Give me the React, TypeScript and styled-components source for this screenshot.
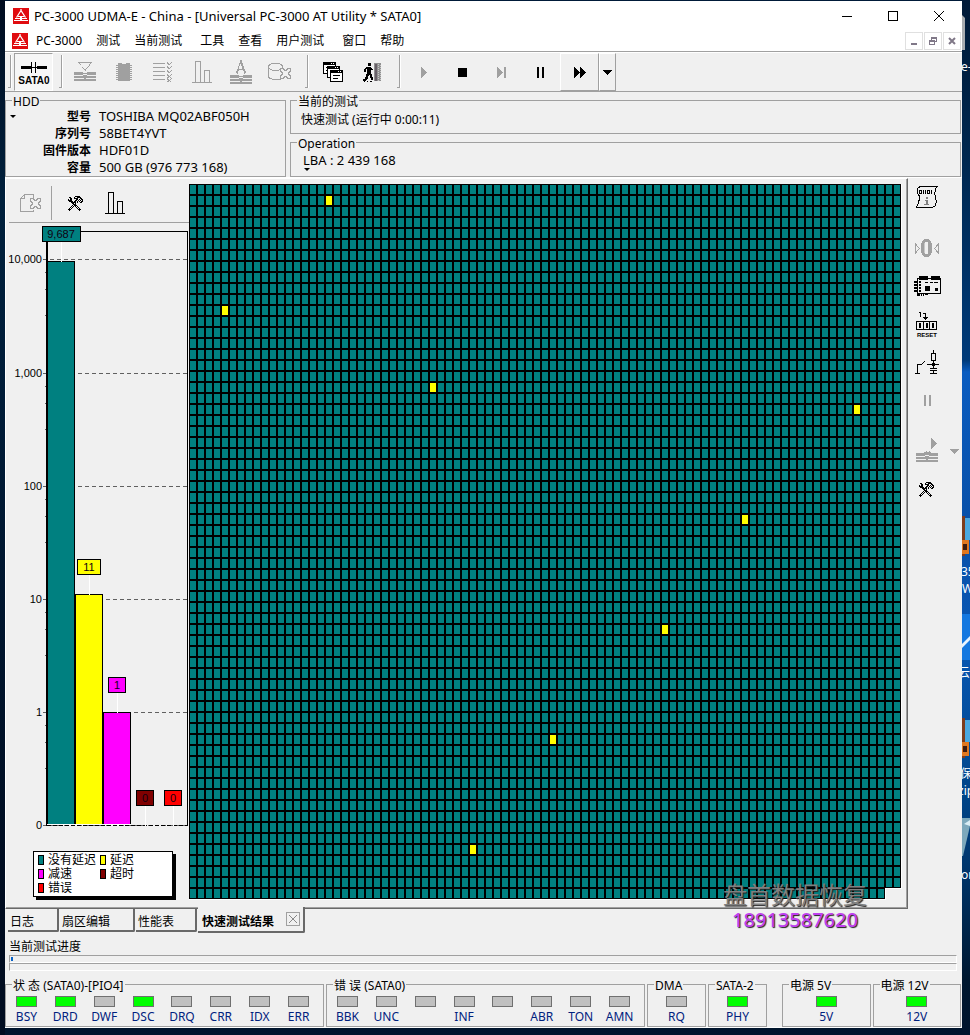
import React from 'react';
import styled, { createGlobalStyle, css } from 'styled-components';

const FACE = '#f0f0f0';
const SHADOW = '#a0a0a0';
const DARK = '#696969';
const TEAL = '#008080';
const YELLOW = '#ffff00';
const MAGENTA = '#ff00ff';
const MAROON = '#800000';
const RED = '#ff0000';

const GlobalStyle = createGlobalStyle`
  * { box-sizing: border-box; }
  body {
    margin: 0;
    background: #00142c;
    color: #000;
    font: 12px/16px "Noto Sans", "Noto Sans CJK SC", sans-serif;
  }
  button {
    margin: 0;
    padding: 0;
    border: 0;
    background: none;
    color: inherit;
    font: inherit;
  }
  svg { display: block; }
`;

/* ---------- desktop and window frame ---------- */

const Desktop = styled.div`
  position: relative;
  min-height: 100vh;
  padding: 1px 8px 8px 5px;
  overflow: hidden;
  background: linear-gradient(#001a38 0, #002850 160px, #003a78 360px, #0a5cc0 372px, #0850a8 520px, #0a58b4 640px, #004a94 760px, #003870 860px, #001830 980px, #00142c);
`;

const LeftEdge = styled.div`
  position: absolute;
  left: 0;
  top: 0;
  bottom: 0;
  width: 5px;
  background: linear-gradient(#000c20, #00203c 200px, #001c38 400px, #000c20 900px);
`;

const RightEdge = styled.svg`
  position: absolute;
  right: 0;
  top: 0;
`;

const Window = styled.main`
  position: relative;
  display: flex;
  flex-direction: column;
  background: ${FACE};
  border-bottom: 1px solid #fff;
`;

const TitleBar = styled.header`
  display: flex;
  align-items: center;
  height: 29px;
  padding-left: 8px;
  background: #fff;
`;

const Title = styled.h1`
  flex: 1;
  margin: 0 0 0 5px;
  font-size: 13px;
  font-weight: 400;
  white-space: nowrap;
`;

const CaptionButton = styled.button`
  display: grid;
  place-items: center;
  width: 46px;
  height: 29px;
`;

const MenuBar = styled.nav`
  display: flex;
  align-items: center;
  height: 22px;
  padding: 0 1px 0 7px;
  background: #fff;
  border-bottom: 1px solid ${SHADOW};
`;

const MenuGroups = styled.div`
  display: flex;
  flex: 1;
  gap: 18px;
  margin-left: 8px;
`;

const MenuGroup = styled.div`
  display: flex;
  gap: 14px;
`;

const MdiButtons = styled.div`
  display: flex;
  gap: 1px;
`;

const MdiButton = styled.button`
  display: grid;
  place-items: center;
  width: 18px;
  height: 18px;
  border: 1px solid #e0e0e0;
`;

/* ---------- main tool bar ---------- */

const ToolBar = styled.div`
  display: flex;
  align-items: stretch;
  height: 40px;
  padding-left: 3px;
  border-top: 1px solid #fff;
  border-bottom: 1px solid ${SHADOW};
`;

const Grip = styled.span<{ $before?: number; $after?: number }>`
  width: 3px;
  margin: 2px ${(p) => p.$after ?? 0}px 3px ${(p) => p.$before ?? 0}px;
  border-right: 1px solid ${SHADOW};
  border-bottom: 1px solid ${SHADOW};
  box-shadow: 1px 0 0 #fff;
`;

const ToolButton = styled.button<{ $pressed?: boolean; $raised?: boolean; $narrow?: boolean }>`
  display: grid;
  place-items: center;
  width: ${(p) => (p.$narrow ? 17 : 39)}px;
  ${(p) =>
    p.$pressed &&
    css`
      background: #f6f6f6;
      border: 1px solid;
      border-color: ${SHADOW} #fff #fff ${SHADOW};
    `}
  ${(p) =>
    p.$raised &&
    css`
      border: 1px solid;
      border-color: #fff ${SHADOW} ${SHADOW} #fff;
    `}
`;

/* ---------- information groups ---------- */

const InfoArea = styled.section`
  display: grid;
  grid-template-columns: 281px 1fr;
  column-gap: 4px;
  padding-right: 1px;
`;

const InfoColumn = styled.div`
  display: flex;
  flex-direction: column;
`;

const Group = styled.fieldset<{ $grow?: number }>`
  position: relative;
  flex: ${(p) => (p.$grow ? `${p.$grow} 1 0` : 'none')};
  min-width: 0;
  margin: 0;
  padding: 0 0 0 6px;
  border: 1px solid ${SHADOW};
`;

const Legend = styled.legend`
  padding: 3px 1px 0;
  background: ${FACE};
  line-height: 14px;
  white-space: nowrap;
`;

const HddList = styled.dl`
  display: grid;
  grid-template-columns: 79px 1fr;
  column-gap: 8px;
  margin: -1px 0 0;
  line-height: 17px;

  dt { font-weight: 700; text-align: right; }
  dd { margin: 0; font-size: 13px; }
`;

const DropMark = styled.span<{ $low?: boolean }>`
  position: absolute;
  left: ${(p) => (p.$low ? 13 : 4)}px;
  top: ${(p) => (p.$low ? 17 : 6)}px;
  border: 3px solid transparent;
  border-top-color: #000;
  border-bottom: 0;
`;

const CurrentTest = styled.p`
  margin: 0;
  padding: 0 0 2px 4px;
  line-height: 22px;
`;

const OperationText = styled.p`
  margin: 0;
  padding: 0 0 7px 6px;
  font-size: 13px;
  line-height: 18px;
`;

/* ---------- result page ---------- */

const Workspace = styled.section`
  display: flex;
  border-top: 1px solid #fff;
`;

const ResultPage = styled.div`
  display: flex;
  flex: 1;
  min-width: 0;
  padding-bottom: 8px;
  border: 1px solid;
  border-color: #fff ${DARK} ${DARK} #fff;
  box-shadow: inset -1px -1px 0 ${SHADOW};
`;

const StatsColumn = styled.div`
  flex: none;
  width: 183px;
`;

const PageTools = styled.div`
  display: flex;
  align-items: center;
  height: 44px;
  margin: 0 0 1px 3px;
  padding: 5px 0 0 2px;
  border-bottom: 1px solid ${SHADOW};
`;

const PageTool = styled.button`
  display: grid;
  place-items: center;
  width: 39px;
  height: 36px;
`;

const Divider = styled.span`
  width: 1px;
  height: 34px;
  margin: 0 4px 0 1px;
  background: ${SHADOW};
`;

const ChartLegend = styled.ul`
  display: grid;
  grid-template-columns: 62px 1fr;
  width: 140px;
  margin: 9px 0 0 27px;
  padding: 1px 4px;
  border: 1px solid #000;
  background: #fff;
  box-shadow: 4px 4px 0 -1px #000, 3px 3px 0 #000;
  list-style: none;
  line-height: 14px;
`;

const LegendItem = styled.li`
  display: flex;
  align-items: center;
  gap: 4px;
  white-space: nowrap;
`;

const Swatch = styled.i<{ $color: string }>`
  width: 6px;
  height: 10px;
  border: 1px solid #000;
  background: ${(p) => p.$color};
`;

const MapArea = styled.div`
  flex: 1;
  min-width: 0;
  padding-top: 5px;
`;

const SideBar = styled.aside`
  flex: none;
  width: 54px;
`;

const SideGroup = styled.div`
  display: flex;
  flex-direction: column;
  margin-bottom: 13px;
`;

const SideRow = styled.div`
  display: flex;
`;

const SideButton = styled.button<{ $narrow?: boolean }>`
  display: grid;
  place-items: center;
  width: ${(p) => (p.$narrow ? 16 : 38)}px;
  height: 38px;
`;

/* ---------- tabs, progress, status ---------- */

const Tabs = styled.div`
  display: flex;
  align-items: flex-start;
  height: 26px;
  padding-left: 3px;
`;

const Tab = styled.button<{ $width: number }>`
  width: ${(p) => p.$width}px;
  height: 23px;
  margin-right: 1px;
  padding: 4px 0 0 2px;
  border-right: 2px solid ${DARK};
  border-bottom: 2px solid ${DARK};
  border-radius: 0 0 2px 0;
  text-align: left;
  white-space: nowrap;
`;

const ActiveTab = styled.div`
  display: flex;
  align-items: center;
  justify-content: space-between;
  width: 107px;
  height: 26px;
  margin-top: -2px;
  padding: 0 3px 1px 4px;
  border-right: 2px solid ${DARK};
  border-bottom: 2px solid ${DARK};
  border-radius: 0 0 2px 0;
  background: ${FACE};
`;

const ActiveTabLabel = styled.button`
  padding-top: 6px;
  font-weight: 700;
  white-space: nowrap;
`;

const CloseTab = styled.button`
  display: grid;
  place-items: center;
  width: 14px;
  height: 14px;
  border: 1px solid ${SHADOW};
`;

const ProgressLabel = styled.label`
  display: block;
  margin: 3px 4px 0;
  line-height: 17px;
`;

const Bar = styled.progress`
  display: block;
  appearance: none;
  width: calc(100% - 9px);
  height: 8px;
  margin-left: 4px;
  padding: 1px;
  border: 1px solid;
  border-color: ${SHADOW} #fff #fff ${SHADOW};
  background: ${FACE};

  &::-webkit-progress-bar { background: ${FACE}; }
  &::-webkit-progress-value { background: #0a64c8; }
`;

const StatusBar = styled.footer`
  display: flex;
  gap: 15px;
  margin-top: 5px;
  padding-right: 1px;
`;

const StatusSet = styled.div<{ $grow: number }>`
  display: flex;
  flex: ${(p) => p.$grow} 1 0;
  gap: 2px;
`;

const LampGroup = styled(Group)`
  padding: 0 1px;
`;

const LampLegend = styled(Legend)`
  margin-left: 5px;
`;

const Lamps = styled.div<{ $row: boolean }>`
  display: flex;
  height: 33px;
  padding: 3px ${(p) => (p.$row ? 4 : 0)}px 0 0;
`;

const Lamp = styled.div`
  flex: 1;
  color: #00217e;
  text-align: center;
  line-height: 18px;
`;

const Led = styled.i<{ $on?: boolean }>`
  display: block;
  width: 21px;
  height: 11px;
  margin: 0 auto 1px;
  border: 1px solid #707070;
  background: ${(p) => (p.$on ? '#00ff00' : '#c0c0c0')};
`;

const Watermark = styled.div`
  position: absolute;
  right: 93px;
  bottom: 95px;
  width: 148px;
  text-align: center;
  text-shadow: 1px 1px 1px #202020;
`;

const WatermarkName = styled.div`
  color: #808080;
  font-size: 24px;
  line-height: 26px;
  white-space: nowrap;
`;

const WatermarkPhone = styled.div`
  color: #c040f0;
  font-size: 20px;
  font-weight: 500;
  line-height: 24px;
`;

/* ---------- icons ---------- */

type IconProps = { w: number; h: number; color?: string; children: React.ReactNode };

const Icon = ({ w, h, color = '#000', children }: IconProps) => (
  <svg width={w} height={h} viewBox={`0 0 ${w} ${h}`} shapeRendering="crispEdges" fill={color} aria-hidden="true">
    {children}
  </svg>
);

/* One-bit picture: every # of a row is a filled pixel. */
const Bitmap = ({ rows, color }: { rows: string[]; color?: string }) => {
  const d = rows
    .flatMap((row, y) => [...row].map((c, x) => (c === '#' ? `M${x} ${y}h1v1h-1z` : '')))
    .join('');
  return (
    <Icon w={Math.max(...rows.map((r) => r.length))} h={rows.length} color={color}>
      <path d={d} />
    </Icon>
  );
};

const AppIcon = () => (
  <svg width="16" height="16" viewBox="0 0 16 16" aria-hidden="true">
    <rect width="16" height="16" fill="#e00c10" />
    <path d="M8 1v2M8 2.500L3.500 9.500M8 2.500L12.500 9.500" stroke="#fff" strokeWidth="1.300" fill="none" />
    <path d="M5 8h6v1H5zM2 10h12v1H2zM1 12h14v1H1z" fill="#fff" />
    <path d="M7 9h2v4H7z" fill="#fff" />
  </svg>
);

const SataIcon = () => (
  <Icon w={32} h={26}>
    <path d="M3 7h10v1h6v-1h10v3H19v-1h-6v1H3zM13 3h1v11h-1zM17 3h1v11h-1z" />
    <text x="16" y="25" fontFamily="Liberation Sans, sans-serif" fontWeight="700" fontSize="10" textAnchor="middle">
      SATA0
    </text>
  </Icon>
);

const PLATES = 'M0 0h9v1h4v-1h9v3h-9v-1h-4v1H0zM0 4h22v2H0zM0 7h22v2H0zM9 3h4v1H9zM10 6h2v1h-2z';

const ClearIcon = () => (
  <Icon w={22} h={20} color={SHADOW}>
    <path d="M4 0h14v1H4zM5 1h1v1h1v2h1v1h1v1h1v1h1v1h1v1h-1v-1h-1v-1h-1v-1h-1v-2h-1v-1h-1zM16 1h1v1h-1v2h-1v1h-1v1h-1v1h-1v1h-1v-1h1v-1h1v-1h1v-1h1v-2h1z" />
    <path transform="translate(0 10)" d={PLATES} />
  </Icon>
);

const ChipIcon = () => (
  <Icon w={16} h={20} color={SHADOW}>
    <path d="M2 1h4v1h4v-1h4v18H2z" />
    <path d="M0 3h16v1H0zM0 5h16v1H0zM0 7h16v1H0zM0 9h16v1H0zM0 11h16v1H0zM0 13h16v1H0zM0 15h16v1H0zM0 17h16v1H0z" />
  </Icon>
);

const ListIcon = () => (
  <Icon w={20} h={20} color={SHADOW}>
    <path d="M0 1h12v1H0zM0 5h12v1H0zM0 9h12v1H0zM0 13h12v1H0zM0 17h12v1H0z" />
    {[0, 4, 8].map((y) => (
      <path key={y} transform={`translate(14 ${y})`} d="M0 0h1v1h1v1h1v-1h1v-1h1v1h-1v1h-1v1h-2v-1h-1z" />
    ))}
    {[12, 16].map((y) => (
      <path key={y} transform={`translate(14 ${y})`} d="M0 0h1v1h1v1h1v-1h1v-1h1v1h-1v1h-1v1h1v1h-1v-1h-1v1H0v-1h1v-1h-1z" />
    ))}
  </Icon>
);

const BarsIcon = ({ color }: { color?: string }) => (
  <Icon w={20} h={22} color={color}>
    <path d="M0 21h20v1H0zM3 0h6v21H8V1H4v20H3zM12 9h6v12h-1V10h-4v11h-1z" />
  </Icon>
);

const CompassIcon = () => (
  <Icon w={22} h={24} color={SHADOW}>
    <path d="M10 0h2v3h1v3h1v3h1v2h1v2h-1v1h-1v-3h-1v-2h-1V6h-1V4h-1v2h-1v3H9v2H8v3H7v-1H6v-2h1V9h1V6h1V3h1zM9 9h4v1H9z" />
    <path transform="translate(0 15)" d={PLATES} />
  </Icon>
);

const CROSS = 'M1 0h3v1h1v1h2v-1h1v-1h3v3h-1v1h-1v2h1v1h1v3h-3v-1h-1v-1H5v1H4v1H1v-3h1v-1h1V4H2V3H1z';

const DiskCrossIcon = () => (
  <Icon w={23} h={18} color={SHADOW}>
    <g fill="none" stroke={SHADOW}>
      <path d="M.5 4v9M14.500 3v3M.5 4c0-5 14-5 14 0M.5 4c0 5 14 4 14 0M.5 13c0 4 10 4 12 3" />
      <path d={CROSS} transform="translate(11.500 5.500)" fill={FACE} />
    </g>
  </Icon>
);

const WindowsIcon = () => (
  <Icon w={20} h={21}>
    {[0, 4, 8].map((n) => (
      <g key={n} transform={`translate(${n === 8 ? 7 : n} ${n})`}>
        <path d="M0 0h13v12H0z" />
        <path d="M1 3h11v8H1zM8 1h1v1H8zM10 1h1v1h-1z" fill="#fff" />
        <path d="M3 5h7v1H3zM3 8h5v1H3z" />
      </g>
    ))}
  </Icon>
);

const ExitIcon = () => (
  <Icon w={18} h={19}>
    <path d="M5 0h3v3H5zM3 4h5v1h1v1h1v1H8v4h1v3h1v3H8v-2H7v-3H6v1H5v3H4v1H3v1H0v-2h2v-2h1v-3h1V6H3v3H1V6h1V5h1zM1 18h1v1H1zM4 18h1v1H4zM7 18h2v1H7z" />
    <path d="M11 0h7v18h-7z" fill="#909090" />
    <path d="M12 1h2v17h-2z" fill="#686068" />
    <path d="M15.500 1v17M17.500 2v16" stroke="#c8c8c8" strokeDasharray="1 1" />
  </Icon>
);

const PlayIcon = () => (
  <Icon w={6} h={11} color={SHADOW}><path d="M0 0h1v1h1v1h1v1h1v1h1v1h1v1h-1v1h-1v1h-1v1h-1v1h-1v1H0z" /></Icon>
);
const StopIcon = () => <Icon w={9} h={9}><path d="M0 0h9v9H0z" /></Icon>;
const StepIcon = () => (
  <Icon w={9} h={11} color={SHADOW}><path d="M0 0h1v1h1v1h1v1h1v1h1v1h1v1h-1v1h-1v1h-1v1h-1v1h-1v1H0zM7 0h2v11H7z" /></Icon>
);
const PauseIcon = ({ color }: { color?: string }) => (
  <Icon w={7} h={11} color={color}><path d="M0 0h2v11H0zM5 0h2v11H5z" /></Icon>
);
const FastIcon = () => (
  <Icon w={12} h={11}>
    {[0, 6].map((x) => (
      <path key={x} transform={`translate(${x} 0)`} d="M0 0h1v1h1v1h1v1h1v1h1v1h1v1h-1v1h-1v1h-1v1h-1v1h-1v1H0z" />
    ))}
  </Icon>
);
const DownIcon = ({ color }: { color?: string }) => (
  <Icon w={9} h={5} color={color}><path d="M0 0h9v1H8v1H7v1H6v1H5v1H4V4H3V3H2V2H1V1H0z" /></Icon>
);

const PageCrossIcon = () => (
  <Icon w={21} h={19}>
    <g fill="none" stroke={SHADOW}>
      <path d="M.5 4.500v13h13v-2M4.500 .5h9v6M4.500 .5v4h-4zM4.500 .5l-4 4" />
      <path d={CROSS} transform="translate(9.500 4.500)" fill={FACE} />
    </g>
  </Icon>
);

const HammerIcon = () => (
  <Bitmap
    rows={[
      '.......#####....',
      '.##...#..####...',
      '..##..####..##..',
      '#.##....##.#.##.',
      '####...##.#.#.#.',
      '.####.##.#.#.##.',
      '...#####.#..##..',
      '....##.#........',
      '.....###........',
      '....#.###.......',
      '...#.#.#.#......',
      '..#.#...#.#.....',
      '.#.#.....#.#....',
      '###.......###...',
      '.#.........#....',
    ]}
  />
);

const ScrollIcon = () => (
  <Icon w={22} h={22}>
    <path d="M3 0h19v1H3zM2 1h2v1H2zM1 2h1v6H1zM2 8h1v2H2zM3 9h1v6H3zM2 14h1v4H2zM1 18h1v2H1zM0 20h1v1H0zM0 21h17v1H0zM17 20h2v1h-2zM19 17h1v3h-1zM20 14h1v3h-1zM19 9h1v5h-1zM18 6h1v3h-1zM19 2h1v4h-1zM20 1h1v1h-1z" />
    <g fill="none" stroke="#000">
      <path d="M3.500 4.500h2v3h-2zM7.500 4v4M9.500 4v4M11.500 4.500h2v3h-2zM15.500 4v4" />
    </g>
    <path d="M10 11h2v2h-2zM9 14h3v4h1v1H8v-1h2v-3H9z" fill="#808080" />
  </Icon>
);

const ZeroIcon = () => (
  <Icon w={24} h={18} color={SHADOW}>
    <path d="M9 0h5v1h1v1h1v2h1v10h-1v2h-1v1h-1v1H9v-1H8v-1H7v-2H6V4h1V2h1V1h1zM10 3v12h3V3z" fillRule="evenodd" />
    <path d="M9 4h1v10H9z" fill="#c8c8c8" />
    <path d="M.5 5v9l4-4.500zM23.500 5v9l-4-4.500z" fill="none" stroke={SHADOW} />
  </Icon>
);

const BoardIcon = () => (
  <Icon w={27} h={20}>
    <path d="M3 2h24v16H3zM4 3v14h22V3z" fillRule="evenodd" />
    <path d="M5 0h9v4H5zM17 0h9v4h-9zM3 18h3v2H3zM7 18h1v2H7zM9 18h1v2H9zM11 18h3v1h-3z" />
    <path d="M0 5h3v2H0zM0 8h3v2H0zM0 11h3v2H0zM0 14h3v2H0zM5 5h2v2H5zM5 8h2v2H5zM5 11h2v2H5zM5 14h2v2H5zM11 10h5v5h-5zM21 12h3v3h-3zM11 6h3v1h-3zM16 6h3v1h-3zM20 6h4v1h-4z" />
  </Icon>
);

const ResetIcon = () => (
  <Icon w={22} h={26}>
    <path d="M3 1h2v5H4V2H3zM7 2h3v4h2v1h-1v1h-1v1H9V8H8V7H7V6h2V3H7z" />
    <path d="M0 10h21v1H0zM0 18h21v1H0zM0 10h1v9H0zM7 10h1v9H7zM13 10h1v9h-1zM20 10h1v9h-1z" />
    <path d="M3.500 12.500h1v4h-1zM10.500 12.500h1v4h-1zM16.500 12.500h1v4h-1z" fill="none" stroke="#000" />
    <text x="11" y="26" fontFamily="Liberation Sans, sans-serif" fontWeight="700" fontSize="6" textAnchor="middle">
      RESET
    </text>
  </Icon>
);

const PowerIcon = () => (
  <Icon w={24} h={24}>
    <path d="M18 0h1v3h-1zM16 3h5v1h-5zM16 3h1v8h-1zM20 3h1v8h-1zM16 10h5v1h-5zM18 11h1v7h-1zM17 13h3v3h-3zM12 14h12v1H12zM15 18h7v1h-7zM15 20h7v1h-7zM18 21h1v2h-1zM15 23h7v1h-7z" />
    <path d="M0 23h5v1H0zM2 14h1v9H2zM2 14h5v1H2zM7 13h1v1H7zM8 12h1v1H8zM9 11h1v1H9z" />
  </Icon>
);

const SpinIcon = () => (
  <Icon w={22} h={26} color={SHADOW}>
    <path d="M15 0h1v1h1v1h1v1h1v1h1v1h1v1h-1v1h-1v1h-1v1h-1v1h-1v1h-1zM8 14h2v-1h1v1h2v-1h1v1h1v2H7v-1h1z" />
    <path transform="translate(0 15)" d={PLATES} />
  </Icon>
);

/* ---------- chart ---------- */

const bars = [
  { x: 42, top: 37, color: TEAL, label: '9,687', w: 39, boxY: 2 },
  { x: 70, top: 370, color: YELLOW, label: '11', w: 24, boxY: 335 },
  { x: 98, top: 488, color: MAGENTA, label: '1', w: 18, boxY: 453 },
  { x: 126, top: 601, color: MAROON, label: '0', w: 18, boxY: 566 },
  { x: 154, top: 601, color: RED, label: '0', w: 18, boxY: 566 },
];

const axis = [
  { y: 35, label: '10,000' },
  { y: 149, label: '1,000' },
  { y: 262, label: '100' },
  { y: 375, label: '10' },
  { y: 488, label: '1' },
  { y: 601, label: '0' },
];

const SpeedChart = () => (
  <svg width="183" height="618" viewBox="1 0 183 618" shapeRendering="crispEdges" fontFamily="Liberation Sans, sans-serif" fontSize="11">
    <path d="M41 7h142v594" fill="none" stroke="#000" transform="translate(-.5 .5)" />
    {axis.map((a) => (
      <g key={a.label}>
        <path d={`M38 ${a.y}.5H182`} stroke="#606060" strokeDasharray="4 3" />
        <path d={`M38 ${a.y}.5h4`} stroke="#606060" />
        <text x="37" y={a.y + 4} textAnchor="end">{a.label}</text>
        {a.label !== '0' &&
          [13, 30, 56].map((n) => <path key={n} d={`M40 ${a.y + n}.5h2`} stroke="#606060" />)}
      </g>
    ))}
    <rect x="41" y="7" width="2" height="595" />
    <path d="M42 601.500h140" stroke="#000" strokeDasharray="4 2" />
    {bars.map((b) => (
      <g key={b.x}>
        {b.top < 601 && (
          <>
            <rect x={b.x} y={b.top} width="28" height={600 - b.top} />
            <rect x={b.x + 1} y={b.top + 1} width="26" height={599 - b.top} fill={b.color} />
            <rect x={b.x} y="600" width="28" height="1" fill="#fff" />
          </>
        )}
        <rect x={b.x + 14} y={b.boxY + 16} width="1" height={b.top - b.boxY - 15} fill="#fff" />
        <rect x={b.x + 14 - Math.floor(b.w / 2)} y={b.boxY} width={b.w} height="16" />
        <rect x={b.x + 15 - Math.floor(b.w / 2)} y={b.boxY + 1} width={b.w - 2} height="14" fill={b.color} />
        <text x={b.x + 14} y={b.boxY + 12} textAnchor="middle" fill="#100010">{b.label}</text>
      </g>
    ))}
  </svg>
);

/* ---------- sector map ---------- */

const COLS = 89;
const ROWS = 65;
const CELL_W = 8;
const CELL_H = 11;
const slowCells = [[17, 1], [4, 11], [30, 18], [83, 20], [69, 30], [59, 40], [45, 50], [35, 60]];

const SectorMap = () => (
  <svg width={COLS * CELL_W + 1} height={ROWS * CELL_H + 1} shapeRendering="crispEdges" role="img" aria-label="LBA map">
    <defs>
      <pattern id="cell" width={CELL_W} height={CELL_H} patternUnits="userSpaceOnUse">
        <rect width={CELL_W} height={CELL_H} />
        <rect x="1" y="1" width="6" height="9" fill={TEAL} />
      </pattern>
    </defs>
    <rect width="100%" height="100%" fill="#fff" />
    <rect x={(COLS - 2) * CELL_W + 1} y={(ROWS - 1) * CELL_H + 1} width="16" height="11" fill={FACE} />
    <rect width={COLS * CELL_W} height={(ROWS - 1) * CELL_H} fill="url(#cell)" />
    <rect y={(ROWS - 1) * CELL_H} width={(COLS - 2) * CELL_W} height={CELL_H} fill="url(#cell)" />
    {slowCells.map(([c, r]) => (
      <rect key={`${c}-${r}`} x={c * CELL_W + 1} y={r * CELL_H + 1} width="6" height="9" fill={YELLOW} />
    ))}
  </svg>
);

/* ---------- data ---------- */

const menus = [['PC-3000', '测试', '当前测试'], ['工具', '查看', '用户测试'], ['窗口', '帮助']];

const hdd = [
  ['型号', 'TOSHIBA MQ02ABF050H'],
  ['序列号', '58BET4YVT'],
  ['固件版本', 'HDF01D'],
  ['容量', '500 GB (976 773 168)'],
];

const legend = [
  { name: '没有延迟', color: TEAL },
  { name: '延迟', color: YELLOW },
  { name: '减速', color: MAGENTA },
  { name: '超时', color: MAROON },
  { name: '错误', color: RED },
];

type LampSet = { title: string; grow: number; lamps: string[]; on: string[] };

const signalSets: LampSet[] = [
  { title: '状 态 (SATA0)-[PIO4]', grow: 315, lamps: ['BSY', 'DRD', 'DWF', 'DSC', 'DRQ', 'CRR', 'IDX', 'ERR'], on: ['BSY', 'DRD', 'DSC'] },
  { title: '错 误 (SATA0)', grow: 315, lamps: ['BBK', 'UNC', '', 'INF', '', 'ABR', 'TON', 'AMN'], on: [] },
  { title: 'DMA', grow: 55, lamps: ['RQ'], on: [] },
  { title: 'SATA-2', grow: 55, lamps: ['PHY'], on: ['PHY'] },
];

const powerSets: LampSet[] = [
  { title: '电源 5V', grow: 85, lamps: ['5V'], on: ['5V'] },
  { title: '电源 12V', grow: 85, lamps: ['12V'], on: ['12V'] },
];

const LampBox = ({ set }: { set: LampSet }) => (
  <LampGroup $grow={set.grow}>
    <LampLegend>{set.title}</LampLegend>
    <Lamps $row={set.lamps.length > 1}>
      {set.lamps.map((name, i) => (
        <Lamp key={i}>
          <Led $on={set.on.includes(name)} />
          {name}
        </Lamp>
      ))}
    </Lamps>
  </LampGroup>
);

const DesktopIcons = () => (
  <RightEdge width="8" height="1035" viewBox="0 0 8 1035" aria-hidden="true">
    <path d="M0 15l3 3v32H0z" fill="#a8acb0" />
    <g fill="#fff" fontFamily="Noto Sans, Noto Sans CJK SC, sans-serif" fontSize="12">
      <text x="-1" y="71">e-</text>
      <text x="-1" y="576">35</text>
      <text x="0" y="593">W</text>
      <text x="-4" y="677">云</text>
      <text x="-2" y="778">保</text>
      <text x="-4" y="795">zip</text>
      <text x="-1" y="879">on</text>
    </g>
    {[516, 718].map((y) => (
      <g key={y} transform={`translate(0 ${y})`}>
        <path d="M0 0h3v40H0z" fill="#7c3c1c" />
        <path d="M3 2h5v22H3z" fill="#4aa8e0" />
        <path d="M0 24h7v14H0z" fill="#e07820" />
        <path d="M1 28h4v6H1z" fill="#3c1c10" />
      </g>
    ))}
    <path d="M0 614h8v46H0z" fill="#1478e0" />
    <path d="M0 644L8 636v4L0 648z" fill="#e8f4ff" />
    <path d="M0 818h8v8L1 856H0z" fill="#7ca8bc" />
    <path d="M2 824l6-4v6z" fill="#d8ecf4" />
  </RightEdge>
);

export default function App() {
  return (
    <Desktop>
      <GlobalStyle />
      <LeftEdge />
      <DesktopIcons />
      <Window>
        <TitleBar>
          <AppIcon />
          <Title>PC-3000 UDMA-E - China - [Universal PC-3000 AT Utility * SATA0]</Title>
          <CaptionButton aria-label="Minimize"><Icon w={10} h={10}><path d="M0 5h10v1H0z" /></Icon></CaptionButton>
          <CaptionButton aria-label="Maximize">
            <Icon w={10} h={10}><path d="M.5 .5h9v9h-9z" fill="none" stroke="#000" /></Icon>
          </CaptionButton>
          <CaptionButton aria-label="Close">
            <svg width="10" height="10" viewBox="0 0 10 10"><path d="M0 0l10 10M10 0L0 10" stroke="#000" /></svg>
          </CaptionButton>
        </TitleBar>

        <MenuBar>
          <AppIcon />
          <MenuGroups>
            {menus.map((group) => (
              <MenuGroup key={group[0]}>
                {group.map((name) => <button key={name}>{name}</button>)}
              </MenuGroup>
            ))}
          </MenuGroups>
          <MdiButtons>
            <MdiButton aria-label="Minimize child"><Icon w={8} h={8} color="#807888"><path d="M1 6h6v2H1z" /></Icon></MdiButton>
            <MdiButton aria-label="Restore child">
              <Icon w={8} h={8} color="#807888">
                <path d="M2 0h6v5H6V4h1V2H3v1H2zM0 3h6v5H0zM1 5v2h4V5z" fillRule="evenodd" />
              </Icon>
            </MdiButton>
            <MdiButton aria-label="Close child">
              <svg width="8" height="8" viewBox="0 0 8 8"><path d="M1 1l6 6M7 1L1 7" stroke="#807888" strokeWidth="2" /></svg>
            </MdiButton>
          </MdiButtons>
        </MenuBar>

        <ToolBar>
          <Grip $after={3} />
          <ToolButton $pressed aria-label="SATA0"><SataIcon /></ToolButton>
          <Grip $before={6} $after={3} />
          <ToolButton aria-label="Clear"><ClearIcon /></ToolButton>
          <ToolButton aria-label="ROM"><ChipIcon /></ToolButton>
          <ToolButton aria-label="List"><ListIcon /></ToolButton>
          <ToolButton aria-label="Chart"><BarsIcon color={SHADOW} /></ToolButton>
          <ToolButton aria-label="Calibrate"><CompassIcon /></ToolButton>
          <ToolButton aria-label="Disk"><DiskCrossIcon /></ToolButton>
          <Grip $before={6} $after={5} />
          <ToolButton aria-label="Windows"><WindowsIcon /></ToolButton>
          <ToolButton aria-label="Exit"><ExitIcon /></ToolButton>
          <Grip $before={6} $after={4} />
          <ToolButton aria-label="Play"><PlayIcon /></ToolButton>
          <ToolButton aria-label="Stop"><StopIcon /></ToolButton>
          <ToolButton aria-label="Step"><StepIcon /></ToolButton>
          <ToolButton aria-label="Pause"><PauseIcon /></ToolButton>
          <ToolButton $raised aria-label="Fast forward"><FastIcon /></ToolButton>
          <ToolButton $raised $narrow aria-label="More"><DownIcon /></ToolButton>
        </ToolBar>

        <InfoArea>
          <Group>
            <Legend>HDD</Legend>
            <DropMark />
            <HddList>
              {hdd.map(([name, value]) => (
                <React.Fragment key={name}>
                  <dt>{name}</dt>
                  <dd>{value}</dd>
                </React.Fragment>
              ))}
            </HddList>
          </Group>
          <InfoColumn>
            <Group>
              <Legend>当前的测试</Legend>
              <CurrentTest>快速测试 (运行中 0:00:11)</CurrentTest>
            </Group>
            <Group>
              <Legend>Operation</Legend>
              <OperationText>LBA : 2 439 168</OperationText>
              <DropMark $low />
            </Group>
          </InfoColumn>
        </InfoArea>

        <Workspace>
          <ResultPage>
            <StatsColumn>
              <PageTools>
                <PageTool aria-label="Clear page"><PageCrossIcon /></PageTool>
                <Divider />
                <PageTool aria-label="Settings"><HammerIcon /></PageTool>
                <PageTool aria-label="Graph"><BarsIcon /></PageTool>
              </PageTools>
              <SpeedChart />
              <ChartLegend>
                {legend.map((item) => (
                  <LegendItem key={item.name}>
                    <Swatch $color={item.color} />
                    {item.name}
                  </LegendItem>
                ))}
              </ChartLegend>
            </StatsColumn>
            <MapArea><SectorMap /></MapArea>
          </ResultPage>
          <SideBar>
            <SideGroup>
              <SideButton aria-label="Information"><ScrollIcon /></SideButton>
            </SideGroup>
            <SideGroup>
              <SideButton aria-label="Zero"><ZeroIcon /></SideButton>
              <SideButton aria-label="Board"><BoardIcon /></SideButton>
              <SideButton aria-label="Reset"><ResetIcon /></SideButton>
              <SideButton aria-label="Power"><PowerIcon /></SideButton>
              <SideButton aria-label="Pause drive"><PauseIcon color={SHADOW} /></SideButton>
            </SideGroup>
            <SideGroup>
              <SideRow>
                <SideButton aria-label="Spin up"><SpinIcon /></SideButton>
                <SideButton $narrow aria-label="Spin options"><DownIcon color={SHADOW} /></SideButton>
              </SideRow>
              <SideButton aria-label="Tools"><HammerIcon /></SideButton>
            </SideGroup>
          </SideBar>
        </Workspace>

        <Tabs>
          <Tab $width={51}>日志</Tab>
          <Tab $width={75}>扇区编辑</Tab>
          <Tab $width={61}>性能表</Tab>
          <ActiveTab>
            <ActiveTabLabel>快速测试结果</ActiveTabLabel>
            <CloseTab aria-label="Close tab">
              <svg width="8" height="8" viewBox="0 0 8 8"><path d="M0 0l8 8M8 0L0 8" stroke="#888" /></svg>
            </CloseTab>
          </ActiveTab>
        </Tabs>

        <ProgressLabel htmlFor="progress">当前测试进度</ProgressLabel>
        <Bar id="progress" value={2} max={944} />
        <Bar aria-label="Total" value={0} max={100} />

        <StatusBar>
          <StatusSet $grow={762}>
            {signalSets.map((set) => <LampBox key={set.title} set={set} />)}
          </StatusSet>
          <StatusSet $grow={179}>
            {powerSets.map((set) => <LampBox key={set.title} set={set} />)}
          </StatusSet>
        </StatusBar>

        <Watermark>
          <WatermarkName>盘首数据恢复</WatermarkName>
          <WatermarkPhone>18913587620</WatermarkPhone>
        </Watermark>
      </Window>
    </Desktop>
  );
}
